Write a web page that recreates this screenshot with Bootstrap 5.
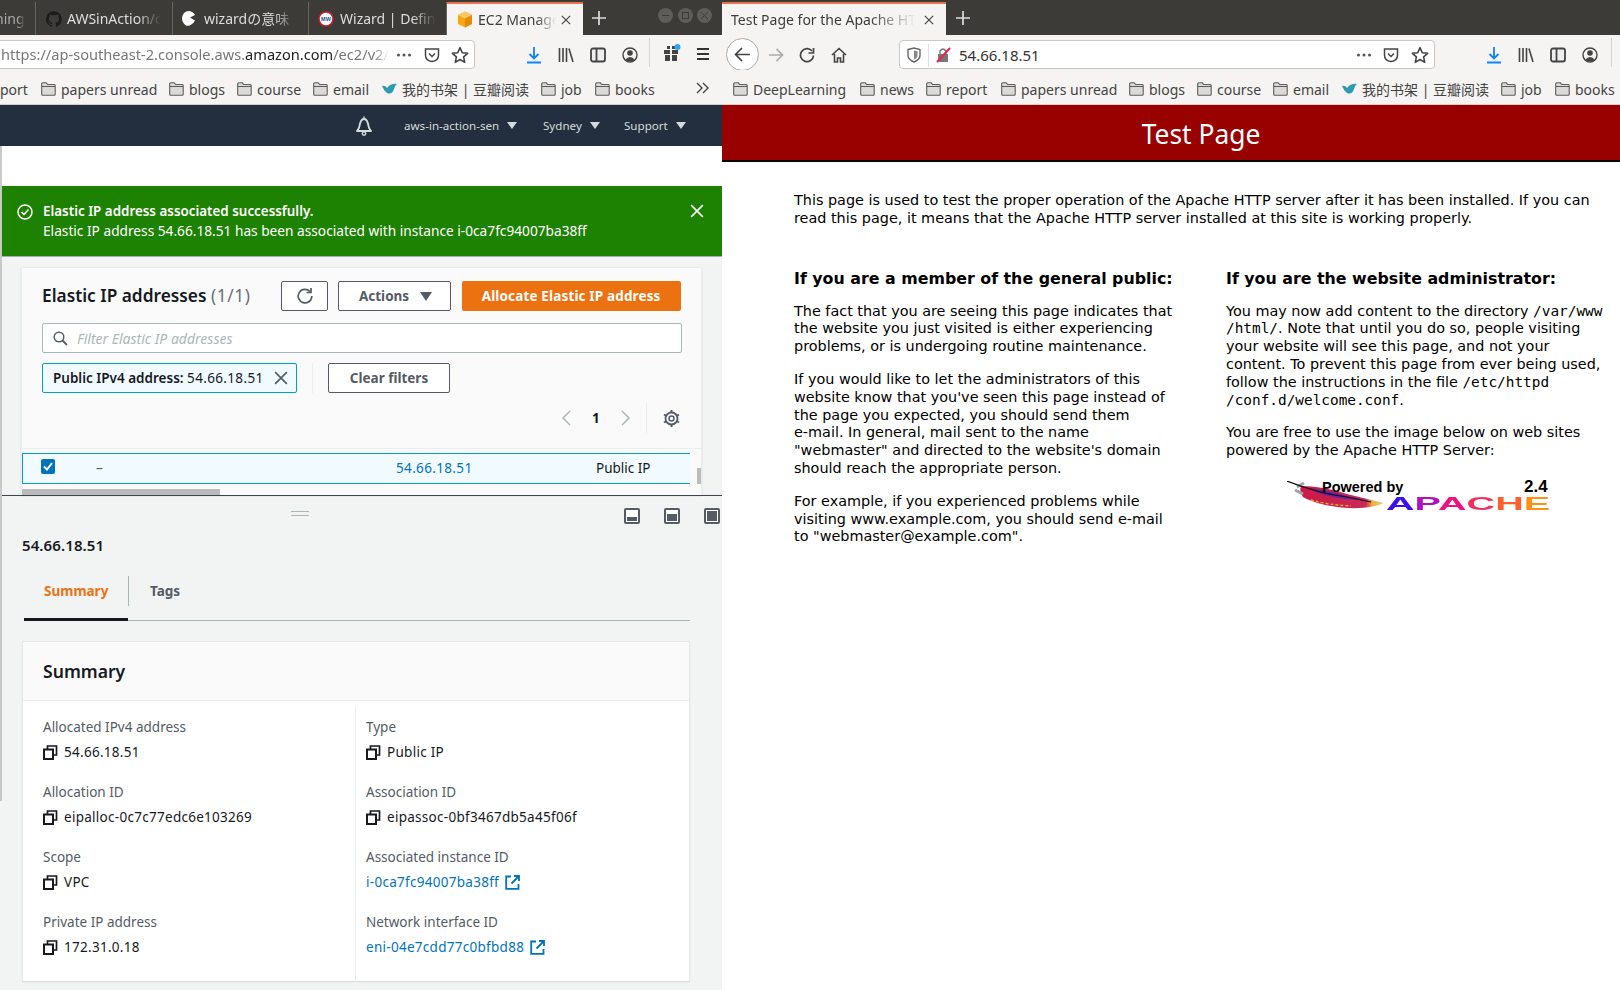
<!DOCTYPE html>
<html lang="en"><head><meta charset="utf-8"><title>Screens</title>
<link rel="stylesheet" href="https://cdn.jsdelivr.net/npm/bootstrap@5.3.0/dist/css/bootstrap.min.css">
<style>
:root{--ui:"Noto Sans","Noto Sans CJK SC",sans-serif}
html,body{margin:0;height:990px;overflow:hidden;background:#fff}
body{font-family:var(--ui);color:#16191f}
.stage{width:1620px;height:990px}
.win-l{width:722px;flex:none;height:990px;overflow:hidden}
.win-r{width:898px;flex:none;height:990px;overflow:hidden}
.tabbar{height:35px;background:#3d3b37;color:#ddd;font-size:14px}
.tb-tab{height:33px;margin-top:2px;padding-left:10px;white-space:nowrap;overflow:hidden;position:relative;border-right:1px solid #66635e}
.tb-fade{overflow:hidden;white-space:nowrap;-webkit-mask-image:linear-gradient(90deg,#000 75%,transparent);mask-image:linear-gradient(90deg,#000 75%,transparent)}
.tb-on{background:#f5f4f2;color:#3c3c3c;border-top:2px solid #e8744f;border-right:0;height:33px}
.wctl{width:15px;height:15px;border-radius:50%;background:#5f5d58;display:flex;align-items:center;justify-content:center}
.toolbar{height:35px;background:#f5f4f2;position:relative}
.urlbar{height:29px;margin-top:5px;background:#fff;border:1px solid #c8c8c6;border-radius:4px;font-size:14.6px;color:#777;white-space:nowrap;overflow:hidden;padding-top:1px}
.urlbar b{font-weight:400;color:#222}
.url-fade{display:block;width:388px;overflow:hidden;-webkit-mask-image:linear-gradient(90deg,#000 96%,transparent);mask-image:linear-gradient(90deg,#000 96%,transparent)}
.marks{height:35px;background:#f5f4f2;border-bottom:1px solid #cfcfcd;font-size:14px;color:#444;white-space:nowrap;overflow:hidden;padding-top:4px}
.mk{display:inline-flex;align-items:center;gap:5px;flex:none}
.ico{display:block;flex:none}
.awsnav{height:41px;background:#232f3e;color:#d5dbdb;font-size:11.6px;position:relative}
.nv-it{position:absolute;top:0;height:41px;display:flex;align-items:center;white-space:nowrap}
.caret-d{display:inline-block;width:0;height:0;border-left:5px solid transparent;border-right:5px solid transparent;border-top:7px solid currentColor}
.aws-main{position:relative;background:#f2f3f3;height:844px;padding-left:2px;font-size:14px}
.aws-main::before{content:"";position:absolute;left:0;top:0;width:2px;height:655px;background:#c9c9c9}
.strip-w{height:40px;background:#fff}
.flash{height:71px;background:#1d8102;color:#fff;border:0;border-radius:0;margin:0;padding:0 0 0 15px;border-bottom:1px solid #aab;position:relative;font-size:13.7px}
.flash b{font-weight:600;font-size:13.4px}
.flash-x{position:absolute;left:688px;top:18px}
.tbl-card{margin:10px 20.5px 0 19px;height:228px;background:#fafafa;border:1px solid #eaeded;border-radius:0;border-bottom:0;position:relative;padding:13px 20px 0 20px;box-shadow:0 1px 1px rgba(0,0,0,.2)}
.ttl{font-size:17.3px;font-weight:600;color:#16191f;white-space:nowrap}
.ttl span{font-weight:400;color:#687078;letter-spacing:.6px}
.bt-o{height:30px;border:1px solid #545b64;border-radius:2px;background:#fff;color:#545b64;font-weight:700;font-size:13.5px;padding:0;display:flex;align-items:center;justify-content:center;gap:11px}
.bt-or{height:30px;width:220px;border:0;border-radius:2px;background:#ec7211;color:#fff;font-weight:700;font-size:13.5px;padding:0;letter-spacing:.15px}
.srch{height:30px;margin-top:12px;width:640px;border:1px solid #aab7b8;border-radius:2px;background:#fff;padding-left:10px;gap:9px;color:#aab7b8;font-style:italic;font-size:14px}
.chip{height:30px;width:255px;background:#f1faff;border:1px solid #00a1c9;border-radius:2px;padding:0 8px 0 10px;white-space:nowrap;font-size:13.5px}
.chip b{font-weight:600}
.num{letter-spacing:.35px}
.vr-l{width:1px;height:30px;background:#eaeded;margin:0 15px}
.pager{height:30px;margin-top:10px;position:relative}
.pg-el{position:absolute;top:0;height:30px;display:flex;align-items:center}
.sel-row{position:absolute;left:0;top:185px;width:668px;height:31px;background:#f1faff;border:1px solid #00a1c9;border-right:0}
.sel-row span{position:absolute;top:0;line-height:29px;font-size:13.5px}
.tbl-top{position:absolute;left:0;right:0;top:180px;height:1px;background:#eaeded}
.chk{position:absolute;left:18px;top:5px;width:14px;height:15px;background:#0073bb;border-radius:2px}
.sb-v{position:absolute;left:675px;top:200px;width:4px;height:16px;background:#bbb}
.sb-h{position:absolute;left:0;bottom:0;width:198px;height:6px;background:#bbb}
.split{border-top:1px solid #3e444b;height:495px;position:relative;padding:0 0 0 20px}
.handle{position:absolute;left:289px;top:15px;width:18px;height:5px;border-top:1px solid #aab7b8;border-bottom:1px solid #aab7b8}
.sp-ic{position:absolute;top:12px}
.sp-ttl{position:absolute;left:20px;top:39px;font-size:15px;font-weight:600;line-height:20px;letter-spacing:.1px}
.tabs-x{position:absolute;left:22px;top:80px;width:666px;height:45px;border-bottom:1px solid #aab7b8;font-size:13.5px;font-weight:700}
.tab-a{width:104px;height:45px;color:#ec7211;border-bottom:3px solid #16191f;padding:5px 0 0 20px;margin:0}
.tab-b{color:#545b64;height:30px;border-left:1px solid #aab7b8;padding:5px 0 0 21px}
.sum-card{position:absolute;left:20px;top:145px;width:668px;height:340px;background:#fff;border:1px solid #e4e7e7;border-bottom:0;border-radius:0;box-shadow:0 1px 1px rgba(0,0,0,.1)}
.sum-hd{height:59px;background:#fafafa;border-bottom:1px solid #eaeded;font-size:17.6px;font-weight:600;padding:0 0 0 20px;line-height:58px}
.sum-l{padding-left:20px}
.sum-r{padding-left:10px;border-left:1px solid #eaeded;margin-top:5px;height:276px}
.fld{height:65px;font-size:13.5px;white-space:nowrap}
.fld-k{color:#545b64;line-height:20px;height:25px}
.fld-v{display:flex;align-items:center;gap:6px;line-height:20px;height:20px;letter-spacing:.28px}
.fld-v a{color:#0073bb;text-decoration:none}
.tp-head{height:57px;background:#990000;border-bottom:2px solid #000;color:#fff;font-size:26.4px;text-align:center;line-height:58px;padding-left:60px}
.tp-body{font-family:"DejaVu Sans",sans-serif;font-size:14.4px;line-height:17.8px;color:#000;padding:30px 0 0 72px;white-space:nowrap;position:relative}
.tp-body p{margin:0 0 15px}
.tp-body h2{font-family:"DejaVu Sans",sans-serif;font-size:15.84px;font-weight:700;line-height:19px;margin:0 0 15px}
.tp-body code{font-family:"DejaVu Sans Mono",monospace;font-size:14.4px;color:#000}
.tp-cols{margin-top:41px;gap:0}
.tp-col1{width:432px;flex:none}
.ap-logo{position:relative;width:263px;height:40px;margin:0 0 0 61px}
.ap-logo svg{position:absolute;left:0;top:6px}
.ap-pw{position:absolute;left:35px;top:3px;font-family:"Liberation Sans",sans-serif;font-weight:700;font-size:14.5px;line-height:18px}
.ap-ver{position:absolute;left:237px;top:3px;font-family:"Liberation Sans",sans-serif;font-weight:700;font-size:17px;line-height:18px}
.ap-name{position:absolute;left:99px;top:18px;font-family:"Liberation Sans",sans-serif;font-weight:700;font-size:19px;line-height:21px;transform:scaleX(2.08);transform-origin:0 0;white-space:nowrap}
.c1{color:#3a10f0}.c2{color:#b010c0}.c3{color:#f01080}.c4{color:#f03060}.c5{color:#ff6030}.c6{color:#ff9010}
.abs{position:absolute}
</style></head><body>
<svg width="0" height="0" class="abs">
<defs>
<symbol id="fold" viewBox="0 0 15 14"><path d="M.7 3V1.800Q.7.800 1.700.800h3.600l1.300 1.700h6.600q1 0 1 1v8.700q0 1-1 1H1.700q-1 0-1-1z" fill="#dcdad6" stroke="#5c5c5c" stroke-width="1.100"/><path d="M1 4.500h13" stroke="#5c5c5c"/></symbol>
<symbol id="dl" viewBox="0 0 16 18"><path d="M8 1v11M3.500 8 8 12.500 12.500 8M1 16.500h14" fill="none" stroke="#0a84ff" stroke-width="1.800"/></symbol>
<symbol id="lib" viewBox="0 0 16 16"><path d="M1.500 1v14M5 1v14M8.500 1v14M11 1.500l4 13.500" fill="none" stroke="#444" stroke-width="1.600"/></symbol>
<symbol id="side" viewBox="0 0 16 16"><rect x="1" y="1.500" width="14" height="13" rx="2" fill="#eee" stroke="#444" stroke-width="1.800"/><path d="M6.500 2v12" stroke="#444" stroke-width="1.800"/></symbol>
<symbol id="acct" viewBox="0 0 16 16"><circle cx="8" cy="8" r="7" fill="none" stroke="#444" stroke-width="1.400"/><circle cx="8" cy="6" r="2.800" fill="#444"/><path d="M3 13q5-6 10 0-5 3-10 0" fill="#444"/></symbol>
<symbol id="pock" viewBox="0 0 16 16"><path d="M1.500 2h13v6q0 6-6.500 6.500Q1.500 14 1.500 8z" fill="none" stroke="#444" stroke-width="1.500"/><path d="M5 6.500 8 9.500l3-3" fill="none" stroke="#444" stroke-width="1.500"/></symbol>
<symbol id="star" viewBox="0 0 16 16"><path d="m8 1.500 2 4.500 4.800.5-3.600 3.200 1 4.800L8 12l-4.200 2.500 1-4.800L1.200 6.500 6 6z" fill="none" stroke="#444" stroke-width="1.400" stroke-linejoin="round"/></symbol>
<symbol id="dots" viewBox="0 0 16 4"><circle cx="2.500" cy="2" r="1.500" fill="#555"/><circle cx="8" cy="2" r="1.500" fill="#555"/><circle cx="13.500" cy="2" r="1.500" fill="#555"/></symbol>
<symbol id="copy" viewBox="0 0 15 15"><path d="M4.500 4V1h9v9h-3" fill="none" stroke="#16191f" stroke-width="1.700"/><rect x="1" y="4.500" width="9" height="9.500" fill="none" stroke="#16191f" stroke-width="2"/></symbol>
<symbol id="ext" viewBox="0 0 15 15"><path d="M6 1.500H1.200v12.300h12.300V9" fill="none" stroke="#0073bb" stroke-width="1.800"/><path d="M9 1h5v5M14 1 6.500 8.500" fill="none" stroke="#0073bb" stroke-width="1.800"/></symbol>
<symbol id="x" viewBox="0 0 12 12"><path d="m1 1 10 10M11 1 1 11" fill="none" stroke="currentColor" stroke-width="1.400"/></symbol>
<symbol id="plus" viewBox="0 0 14 14"><path d="M7 0v14M0 7h14" stroke="#ddd" stroke-width="1.700"/></symbol>
</defs></svg>
<div class="stage d-flex">
<div class="win-l">
  <div class="tabbar d-flex position-relative">
    <div class="tb-tab d-flex align-items-center" style="width:36px;padding-left:0"><span class="tb-fade" style="color:#aaa;margin-left:-5px">ning</span></div>
    <div class="tb-tab d-flex align-items-center" style="width:137px;gap:5px"><svg class="ico" width="16" height="16" viewBox="0 0 16 16"><path fill="#1c1c1c" d="M8 .2a8 8 0 0 0-2.500 15.600c.4.100.5-.2.500-.4v-1.400c-2.200.5-2.700-1-2.700-1-.4-.9-.9-1.200-.9-1.200-.7-.5.100-.5.100-.5.800.1 1.200.8 1.200.8.700 1.200 1.900.9 2.300.7.100-.5.300-.9.500-1.100-1.800-.2-3.600-.9-3.600-4 0-.9.300-1.600.8-2.100-.1-.2-.4-1 .1-2.100 0 0 .7-.2 2.200.8a7.600 7.600 0 0 1 4 0c1.500-1 2.200-.8 2.200-.8.400 1.100.2 1.900.1 2.100.5.600.8 1.300.8 2.100 0 3.100-1.900 3.700-3.700 3.900.3.300.6.800.6 1.500v2.200c0 .2.100.5.600.4A8 8 0 0 0 8 .2z"/></svg><span class="tb-fade" style="width:94px">AWSinAction/c</span></div>
    <div class="tb-tab d-flex align-items-center" style="width:136px;padding-left:8px;gap:7px"><svg class="ico" width="16" height="17" viewBox="0 0 16 17"><path fill="#fff" d="M8 1a7.500 7.500 0 0 1 6 4L9 7.500l5 3c-2 4-6 6-9 5Q1 13 1 8q1-7 7-7z"/></svg><span class="tb-fade" style="width:92px">wizardの意味</span></div>
    <div class="tb-tab d-flex align-items-center" style="width:138px;padding-left:9px;gap:6px"><svg class="ico" width="16" height="16" viewBox="0 0 16 16"><circle cx="8" cy="8" r="7" fill="#fff" stroke="#c9202c" stroke-width="1.600"/><text x="8" y="10" font-size="5.500" font-weight="700" text-anchor="middle" fill="#1a4f8b" font-family="Liberation Sans,sans-serif">MW</text></svg><span class="tb-fade" style="width:96px">Wizard | Define</span></div>
    <div class="tb-tab tb-on d-flex align-items-center" style="width:136px;gap:5px"><svg class="ico" width="16" height="17" viewBox="0 0 16 17"><path fill="#f7a80d" d="M8 .500 15 4v9l-7 3.500L1 13V4z"/><path fill="#fbc96b" d="M1 4l7-3.500L15 4 8 7.500z"/><path fill="#e58a08" d="M8 7.500V16.500l7-3.500V4z"/></svg><span class="tb-fade" style="width:78px">EC2 Manage</span><svg class="ico ms-auto" width="10" height="10" style="margin-right:12px;color:#444"><use href="#x"/></svg></div>
    <svg class="ico abs" width="14" height="14" style="left:592px;top:11px"><use href="#plus"/></svg>
    <div class="wctl abs" style="left:658px;top:8px"><svg width="7" height="7" viewBox="0 0 7 7"><path d="M0 3.500h7" stroke="#3d3b37"/></svg></div>
    <div class="wctl abs" style="left:678px;top:8px"><svg width="7" height="7" viewBox="0 0 7 7"><rect x=".5" y=".5" width="6" height="6" fill="none" stroke="#3d3b37"/></svg></div>
    <div class="wctl abs" style="left:697px;top:8px"><svg width="7" height="7" viewBox="0 0 7 7"><path d="m0 0 7 7M7 0 0 7" stroke="#3d3b37"/></svg></div>
  </div>
  <div class="toolbar">
    <div class="urlbar d-flex align-items-center abs" style="left:-4px;top:0;width:479px;padding-left:4px"><span class="url-fade">https://ap-southeast-2.console.aws.<b>amazon.com</b>/ec2/v2/home?region=ap-southeast-2</span></div>
    <svg class="ico abs" width="16" height="4" style="left:396px;top:18px"><use href="#dots"/></svg>
    <svg class="ico abs" width="16" height="16" style="left:424px;top:12px"><use href="#pock"/></svg>
    <svg class="ico abs" width="18" height="18" style="left:451px;top:11px"><use href="#star"/></svg>
    <svg class="ico abs" width="16" height="18" style="left:526px;top:11px"><use href="#dl"/></svg>
    <svg class="ico abs" width="16" height="16" style="left:558px;top:12px"><use href="#lib"/></svg>
    <svg class="ico abs" width="16" height="16" style="left:590px;top:12px"><use href="#side"/></svg>
    <svg class="ico abs" width="16" height="16" style="left:622px;top:12px"><use href="#acct"/></svg>
    <div class="abs" style="left:649px;top:3px;width:1px;height:29px;background:#d5d5d3"></div>
    <svg class="ico abs" width="18" height="18" style="left:663px;top:9px" viewBox="0 0 18 18"><path fill="#444" d="M1 6h6v4H1zm8 0h6v4H9zM2 11h5v6H2zm7 0h5v6H9zM4 2h3v3H4zm5 0h3v3H9z"/><circle cx="14.500" cy="3" r="3" fill="#2aa5f5"/></svg>
    <svg class="ico abs" width="14" height="14" style="left:696px;top:12px" viewBox="0 0 14 14"><path d="M1 2h12M1 7h12M1 12h12" stroke="#333" stroke-width="1.800"/></svg>
  </div>
  <div class="marks d-flex align-items-center position-relative">
    <span class="mk abs" style="left:0">port</span>
    <span class="mk abs" style="left:41px"><svg class="ico" width="15" height="14"><use href="#fold"/></svg>papers unread</span>
    <span class="mk abs" style="left:169px"><svg class="ico" width="15" height="14"><use href="#fold"/></svg>blogs</span>
    <span class="mk abs" style="left:237px"><svg class="ico" width="15" height="14"><use href="#fold"/></svg>course</span>
    <span class="mk abs" style="left:313px"><svg class="ico" width="15" height="14"><use href="#fold"/></svg>email</span>
    <span class="mk abs" style="left:382px"><svg class="ico" width="15" height="12" viewBox="0 0 15 12"><path fill="#2c9bb0" d="M0 3q3-1 5 2 4-5 10-4-2 1-3 5-2 6-7 4Q2 8 0 3z"/></svg>我的书架 | 豆瓣阅读</span>
    <span class="mk abs" style="left:541px"><svg class="ico" width="15" height="14"><use href="#fold"/></svg>job</span>
    <span class="mk abs" style="left:595px"><svg class="ico" width="15" height="14"><use href="#fold"/></svg>books</span>
    <svg class="ico abs" width="13" height="12" style="left:696px;top:12px" viewBox="0 0 13 12"><path d="m1 1 5 5-5 5M7 1l5 5-5 5" fill="none" stroke="#444" stroke-width="1.400"/></svg>
  </div>
  <div class="awsnav">
    <div class="nv-it" style="left:355px"><svg class="ico" width="18" height="22" viewBox="0 0 18 22"><path d="M2 16q2-2 2.500-5T6 6q1-2 3-2t3 2q1 2 1.500 5t2.500 5z" fill="none" stroke="#d5dbdb" stroke-width="1.800" stroke-linejoin="round"/><path d="M9 1.500V4" stroke="#d5dbdb" stroke-width="1.500"/><circle cx="9" cy="18.500" r="1.700" fill="none" stroke="#d5dbdb" stroke-width="1.400"/></svg></div>
    <div class="nv-it gap-2" style="left:404px">aws-in-action-sen <i class="caret-d"></i></div>
    <div class="nv-it gap-2" style="left:543px">Sydney <i class="caret-d"></i></div>
    <div class="nv-it gap-2" style="left:624px">Support <i class="caret-d"></i></div>
  </div>
  <div class="aws-main">
    <div class="strip-w"></div>
    <div class="alert flash d-flex align-items-center gap-2" role="alert">
      <svg class="ico" width="16" height="16" viewBox="0 0 16 16" style="margin-top:-18px"><circle cx="8" cy="8" r="7" fill="none" stroke="#fff" stroke-width="1.500"/><path d="m4.500 8 2.500 2.500L11.500 5.500" fill="none" stroke="#fff" stroke-width="1.500"/></svg>
      <div style="line-height:20px;margin-left:2px;white-space:nowrap"><b>Elastic IP address associated successfully.</b><br>Elastic IP address 54.66.18.51 has been associated with instance i-0ca7fc94007ba38ff</div>
      <svg class="flash-x" width="14" height="14" style="color:#fff"><use href="#x"/></svg>
    </div>
    <div class="tbl-card card">
      <div class="d-flex align-items-center">
        <div class="ttl" style="width:240px">Elastic IP addresses <span>(1/1)</span></div>
        <button class="btn bt-o" style="width:48px" aria-label="Refresh"><svg width="18" height="18" viewBox="0 0 18 18"><path d="M14 4.500A6.800 6.800 0 1 0 15.800 9" fill="none" stroke="#545b64" stroke-width="1.700"/><path d="M15 1v4.500h-4.500" fill="none" stroke="#545b64" stroke-width="1.700"/></svg></button>
        <button class="btn bt-o" style="width:113px;margin-left:10px;padding-left:2px">Actions <i class="caret-d" style="border-left-width:6px;border-right-width:6px;border-top-width:9px"></i></button>
        <button class="btn bt-or" style="margin-left:11px">Allocate Elastic IP address</button>
      </div>
      <div class="srch d-flex align-items-center"><svg class="ico" width="15" height="15" viewBox="0 0 15 15"><circle cx="6" cy="6" r="4.800" fill="none" stroke="#545b64" stroke-width="1.500"/><path d="m9.500 9.500 4.500 4.500" stroke="#545b64" stroke-width="1.800"/></svg>Filter Elastic IP addresses</div>
      <div class="d-flex align-items-center" style="margin-top:10px">
        <div class="chip d-flex align-items-center"><span><b>Public IPv4 address:</b> <span class="num">54.66.18.51</span></span><svg class="ico ms-auto" width="14" height="14" style="color:#545b64"><use href="#x"/></svg></div>
        <div class="vr-l"></div>
        <button class="btn bt-o" style="width:122px">Clear filters</button>
      </div>
      <div class="pager">
        <div class="pg-el" style="left:519px"><svg width="10" height="16" viewBox="0 0 10 16"><path d="M9 1 2 8l7 7" fill="none" stroke="#aab7b8" stroke-width="1.500"/></svg></div>
        <div class="pg-el" style="left:550px;font-weight:700;font-size:13.5px">1</div>
        <div class="pg-el" style="left:579px"><svg width="10" height="16" viewBox="0 0 10 16"><path d="m1 1 7 7-7 7" fill="none" stroke="#aab7b8" stroke-width="1.500"/></svg></div>
        <div class="pg-el" style="left:604px;width:1px;background:#eaeded"></div>
        <div class="pg-el" style="left:621px"><svg width="17" height="17" viewBox="0 0 17 17"><circle cx="8.500" cy="8.500" r="2.500" fill="none" stroke="#545b64" stroke-width="1.500"/><circle cx="8.500" cy="8.500" r="6" fill="none" stroke="#545b64" stroke-width="1.800"/><path d="M8.500 0v3M8.500 14v3M1 4.500l2.500 1.500M13.500 11l2.500 1.500M16 4.500 13.500 6M3.500 11 1 12.500" stroke="#545b64" stroke-width="2"/></svg></div>
      </div>
      <div class="tbl-top"></div>
      <div class="sel-row">
        <i class="chk"><svg class="abs" style="left:2px;top:3px" width="10" height="9" viewBox="0 0 10 9"><path d="m1 4.500 3 3L9 1" fill="none" stroke="#fff" stroke-width="2"/></svg></i>
        <span style="left:73px;color:#545b64">–</span>
        <span class="num" style="left:373px;color:#0073bb">54.66.18.51</span>
        <span style="left:573px">Public IP</span>
      </div>
      <div class="sb-v"></div><div class="sb-h"></div>
    </div>
    <div class="split">
      <div class="handle"></div>
      <svg class="sp-ic" style="left:622px" width="16" height="16" viewBox="0 0 16 16"><rect x="1" y="1" width="14" height="14" rx="1" fill="#fff" stroke="#545b64" stroke-width="2"/><rect x="3" y="9" width="10" height="4" fill="#545b64"/></svg>
      <svg class="sp-ic" style="left:662px" width="16" height="16" viewBox="0 0 16 16"><rect x="1" y="1" width="14" height="14" rx="1" fill="#fff" stroke="#545b64" stroke-width="2"/><rect x="3" y="6" width="10" height="7" fill="#545b64"/></svg>
      <svg class="sp-ic" style="left:702px" width="16" height="16" viewBox="0 0 16 16"><rect x="1" y="1" width="14" height="14" rx="1" fill="#fff" stroke="#545b64" stroke-width="2"/><rect x="3" y="3" width="10" height="10" fill="#545b64"/></svg>
      <div class="sp-ttl">54.66.18.51</div>
      <div class="tabs-x d-flex"><div class="tab-a">Summary</div><div class="tab-b">Tags</div></div>
      <div class="sum-card card">
        <div class="sum-hd">Summary</div>
        <div class="row g-0">
          <div class="col-6 sum-l" style="width:332px;padding-top:16px">
            <div class="fld"><div class="fld-k">Allocated IPv4 address</div><div class="fld-v"><svg class="ico" width="15" height="15"><use href="#copy"/></svg>54.66.18.51</div></div>
            <div class="fld"><div class="fld-k">Allocation ID</div><div class="fld-v"><svg class="ico" width="15" height="15"><use href="#copy"/></svg>eipalloc-0c7c77edc6e103269</div></div>
            <div class="fld"><div class="fld-k">Scope</div><div class="fld-v"><svg class="ico" width="15" height="15"><use href="#copy"/></svg>VPC</div></div>
            <div class="fld"><div class="fld-k">Private IP address</div><div class="fld-v"><svg class="ico" width="15" height="15"><use href="#copy"/></svg>172.31.0.18</div></div>
          </div>
          <div class="col-6 sum-r" style="width:332px;padding-top:11px">
            <div class="fld"><div class="fld-k">Type</div><div class="fld-v"><svg class="ico" width="15" height="15"><use href="#copy"/></svg>Public IP</div></div>
            <div class="fld"><div class="fld-k">Association ID</div><div class="fld-v"><svg class="ico" width="15" height="15"><use href="#copy"/></svg>eipassoc-0bf3467db5a45f06f</div></div>
            <div class="fld"><div class="fld-k">Associated instance ID</div><div class="fld-v"><a href="#">i-0ca7fc94007ba38ff</a><svg class="ico" width="15" height="15"><use href="#ext"/></svg></div></div>
            <div class="fld"><div class="fld-k">Network interface ID</div><div class="fld-v"><a href="#">eni-04e7cdd77c0bfbd88</a><svg class="ico" width="15" height="15"><use href="#ext"/></svg></div></div>
          </div>
        </div>
      </div>
    </div>
  </div>
</div>
<div class="win-r">
  <div class="tabbar d-flex position-relative">
    <div class="tb-tab tb-on d-flex align-items-center gap-2" style="width:224px;padding-left:9px"><span class="tb-fade" style="width:188px">Test Page for the Apache HTTP</span><svg class="ico ms-auto" width="10" height="10" style="margin-right:12px;color:#444"><use href="#x"/></svg></div>
    <svg class="ico abs" width="14" height="14" style="left:234px;top:11px"><use href="#plus"/></svg>
  </div>
  <div class="toolbar">
    <div class="abs d-flex align-items-center justify-content-center" style="left:4px;top:3px;width:33px;height:33px;border-radius:50%;background:#fff;border:1px solid #aaa"><svg width="17" height="15" viewBox="0 0 17 15"><path d="M16 7.500H2M8 1 1.500 7.500 8 14" fill="none" stroke="#444" stroke-width="1.700"/></svg></div>
    <svg class="ico abs" width="16" height="14" style="left:46px;top:13px" viewBox="0 0 17 15"><path d="M1 7.500h14M9 1l6.500 6.500L9 14" fill="none" stroke="#aaa" stroke-width="1.700"/></svg>
    <svg class="ico abs" width="16" height="16" style="left:77px;top:12px" viewBox="0 0 16 16"><path d="M13 4a6.500 6.500 0 1 0 1.500 4.500" fill="none" stroke="#444" stroke-width="1.700"/><path d="M14.500 1v5h-5" fill="none" stroke="#444" stroke-width="1.700"/></svg>
    <svg class="ico abs" width="16" height="16" style="left:109px;top:12px" viewBox="0 0 16 16"><path d="M1 8 8 1.500 15 8M3.500 7v8h3v-4h3v4h3V7" fill="none" stroke="#444" stroke-width="1.600"/></svg>
    <div class="urlbar d-flex align-items-center abs" style="left:177px;top:0;width:536px;color:#333">
      <svg class="ico" style="margin-left:7px" width="14" height="16" viewBox="0 0 14 16"><path d="M1 2.500 7 1l6 1.500v6q0 4-6 6.500-6-2.500-6-6.500z" fill="none" stroke="#666" stroke-width="1.400"/><path d="M7 3.500v9q3.500-1.500 3.500-4.500V4.200z" fill="#888"/></svg>
      <span style="width:1px;height:23px;background:#ddd;margin-left:7px"></span>
      <svg class="ico" style="margin-left:7px" width="15" height="16" viewBox="0 0 15 16"><rect x="2" y="7" width="10" height="8" fill="#777"/><path d="M4 7V4q3-4 6 0v3" fill="none" stroke="#777" stroke-width="1.400"/><path d="m1 15 13-14" stroke="#f02050" stroke-width="2"/></svg>
      <span style="margin-left:8px;font-size:15px">54.66.18.51</span>
    </div>
    <svg class="ico abs" width="16" height="4" style="left:634px;top:18px"><use href="#dots"/></svg>
    <svg class="ico abs" width="16" height="16" style="left:661px;top:12px"><use href="#pock"/></svg>
    <svg class="ico abs" width="18" height="18" style="left:689px;top:11px"><use href="#star"/></svg>
    <svg class="ico abs" width="16" height="18" style="left:764px;top:11px"><use href="#dl"/></svg>
    <svg class="ico abs" width="16" height="16" style="left:796px;top:12px"><use href="#lib"/></svg>
    <svg class="ico abs" width="16" height="16" style="left:828px;top:12px"><use href="#side"/></svg>
    <svg class="ico abs" width="16" height="16" style="left:860px;top:12px"><use href="#acct"/></svg>
    <div class="abs" style="left:889px;top:3px;width:1px;height:29px;background:#d5d5d3"></div>
  </div>
  <div class="marks d-flex align-items-center position-relative">
    <span class="mk abs" style="left:11px"><svg class="ico" width="15" height="14"><use href="#fold"/></svg>DeepLearning</span>
    <span class="mk abs" style="left:138px"><svg class="ico" width="15" height="14"><use href="#fold"/></svg>news</span>
    <span class="mk abs" style="left:204px"><svg class="ico" width="15" height="14"><use href="#fold"/></svg>report</span>
    <span class="mk abs" style="left:279px"><svg class="ico" width="15" height="14"><use href="#fold"/></svg>papers unread</span>
    <span class="mk abs" style="left:407px"><svg class="ico" width="15" height="14"><use href="#fold"/></svg>blogs</span>
    <span class="mk abs" style="left:475px"><svg class="ico" width="15" height="14"><use href="#fold"/></svg>course</span>
    <span class="mk abs" style="left:551px"><svg class="ico" width="15" height="14"><use href="#fold"/></svg>email</span>
    <span class="mk abs" style="left:620px"><svg class="ico" width="15" height="12" viewBox="0 0 15 12"><path fill="#2c9bb0" d="M0 3q3-1 5 2 4-5 10-4-2 1-3 5-2 6-7 4Q2 8 0 3z"/></svg>我的书架 | 豆瓣阅读</span>
    <span class="mk abs" style="left:779px"><svg class="ico" width="15" height="14"><use href="#fold"/></svg>job</span>
    <span class="mk abs" style="left:833px"><svg class="ico" width="15" height="14"><use href="#fold"/></svg>books</span>
  </div>
  <div class="tp-head">Test Page</div>
  <div class="tp-body">
    <p style="margin:0">This page is used to test the proper operation of the Apache HTTP server after it has been installed. If you can<br>read this page, it means that the Apache HTTP server installed at this site is working properly.</p>
    <div class="d-flex tp-cols">
      <div class="tp-col1">
        <h2>If you are a member of the general public:</h2>
        <p>The fact that you are seeing this page indicates that<br>the website you just visited is either experiencing<br>problems, or is undergoing routine maintenance.</p>
        <p>If you would like to let the administrators of this<br>website know that you've seen this page instead of<br>the page you expected, you should send them<br>e-mail. In general, mail sent to the name<br>"webmaster" and directed to the website's domain<br>should reach the appropriate person.</p>
        <p>For example, if you experienced problems while<br>visiting www.example.com, you should send e-mail<br>to "webmaster@example.com".</p>
      </div>
      <div>
        <h2>If you are the website administrator:</h2>
        <p>You may now add content to the directory <code>/var/www</code><br><code>/html/</code>. Note that until you do so, people visiting<br>your website will see this page, and not your<br>content. To prevent this page from ever being used,<br>follow the instructions in the file <code>/etc/httpd</code><br><code>/conf.d/welcome.conf</code>.</p>
        <p>You are free to use the image below on web sites<br>powered by the Apache HTTP Server:</p>
        <div class="ap-logo">
          <svg width="100" height="30" viewBox="0 0 100 30"><defs><linearGradient id="fe" x1="0" x2="1" y1="0" y2="0"><stop offset="0" stop-color="#d01848"/><stop offset=".35" stop-color="#c8204a"/><stop offset=".78" stop-color="#c92a55"/><stop offset=".86" stop-color="#e8b040"/><stop offset="1" stop-color="#e8d488"/></linearGradient></defs><path d="M14 5Q35 5 60 13q20 5 37 9-12 6-36 5Q32 25 16 16 12 10 14 5z" fill="url(#fe)"/><path d="M20 7Q40 9 60 15l18 4-20-1Q35 15 20 7z" fill="#6a1fa8"/><path d="M24 19Q42 24 64 25" fill="none" stroke="#f0b030" stroke-width="1.300" stroke-dasharray="3 2"/><path d="M10 6 17 2M8 9l8 4" stroke="#9aa4aa" stroke-width="3"/><path d="M0 0Q30 12 60 16l24 5" fill="none" stroke="#111" stroke-width="1.200"/></svg>
          <span class="ap-pw">Powered by</span>
          <span class="ap-ver">2.4</span>
          <span class="ap-name"><span class="c1">A</span><span class="c2">P</span><span class="c3">A</span><span class="c4">C</span><span class="c5">H</span><span class="c6">E</span></span>
        </div>
      </div>
    </div>
  </div>
</div>
</div>
<script src="https://cdn.jsdelivr.net/npm/bootstrap@5.3.0/dist/js/bootstrap.bundle.min.js"></script>
</body></html>
